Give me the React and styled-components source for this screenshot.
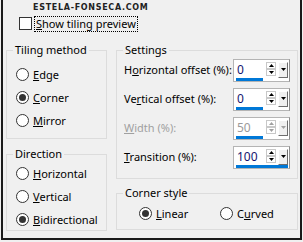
import React from "react";
import styled, { createGlobalStyle } from "styled-components";

const GlobalStyle = createGlobalStyle`
  html, body {
    margin: 0;
    padding: 0;
    background: #f0f0f0;
  }
  body {
    font-family: "Noto Sans", "Open Sans", sans-serif;
    font-size: 11px;
    color: #000;
  }
`;

const Frame = styled.div`
  box-sizing: border-box;
  width: 301px;
  height: 240px;
  margin-left: 1px;
  border: 2px solid #1a1a1a;
  border-top: none;
  padding: 0 2px 0 3px;
`;

const Watermark = styled.div`
  height: 16px;
  padding-left: 27px;
  font-family: "DejaVu Sans", sans-serif;
  font-weight: bold;
  font-size: 8px;
  line-height: 15px;
  letter-spacing: 0.7px;
  color: #222;
`;

const CheckRow = styled.div`
  display: flex;
  align-items: center;
  height: 15px;
  padding-left: 13px;
`;

const Box = styled.span`
  box-sizing: border-box;
  width: 13px;
  height: 13px;
  background: #fff;
  border: 1px solid #333;
`;

const FocusLabel = styled.span`
  margin-left: 3px;
  padding: 0 1px;
  line-height: 14px;
  white-space: nowrap;
  outline: 1px dotted #000;
`;

const Columns = styled.div`
  display: flex;
  gap: 9px;
  margin-top: 11px;
`;

const Column = styled.div`
  display: flex;
  flex-direction: column;
  gap: ${(p) => p.$gap}px;
  width: ${(p) => p.$width}px;
`;

const Group = styled.fieldset`
  box-sizing: border-box;
  margin: 0;
  min-width: 0;
  height: ${(p) => p.$height}px;
  padding: 0;
  border: 1px solid #dcdcdc;
`;

const Legend = styled.legend`
  margin-left: 6px;
  padding: 0 2px;
  line-height: 16px;
`;

const GroupBody = styled.div`
  padding: ${(p) => p.$pad};
`;

const Option = styled.label`
  display: flex;
  align-items: center;
  height: 23px;
  white-space: nowrap;
  width: ${(p) => (p.$width ? `${p.$width}px` : "auto")};
`;

const Radio = styled.span`
  box-sizing: border-box;
  display: flex;
  align-items: center;
  justify-content: center;
  flex: none;
  width: 13px;
  height: 13px;
  margin-right: 4px;
  border-radius: 50%;
  border: 1px solid #333;
  background: #fff;

  &::after {
    content: "";
    display: ${(p) => (p.$checked ? "block" : "none")};
    width: 7px;
    height: 7px;
    border-radius: 50%;
    background: #333;
  }
`;

const InlineOptions = styled.div`
  display: flex;
`;

const SettingRow = styled.div`
  display: flex;
  align-items: center;
  justify-content: space-between;
  height: 23px;
  margin-bottom: 6px;
  white-space: nowrap;
  color: ${(p) => (p.$disabled ? "#a0a0a0" : "#000")};
`;

const SettingLabel = styled.span`
  margin-top: -3px;
`;

const Spin = styled.div`
  position: relative;
  box-sizing: border-box;
  display: flex;
  align-items: center;
  flex: none;
  width: 57px;
  height: 23px;
  background: #fff;
  border: 1px solid #b4b4b4;
  border-right-color: #8e8e8e;
  font-size: 12px;

  &::after {
    content: "";
    position: absolute;
    left: 2px;
    bottom: 0;
    width: ${(p) => (p.$focused ? "52px" : "27px")};
    height: 3px;
    background: #0078d7;
  }
`;

const Field = styled.span`
  box-sizing: border-box;
  width: 27px;
  margin: -3px 3px 0 2px;
  padding-left: 1px;
  color: ${(p) => (p.$disabled ? "#9a9a9a" : "#141470")};
`;

const Arrows = styled.span`
  display: flex;
  flex-direction: column;
  width: 10px;
  margin-top: -3px;
`;

const ArrowBtn = styled.span`
  box-sizing: border-box;
  display: flex;
  align-items: center;
  justify-content: center;
  height: 7px;
  border: 1px solid #c8c8c8;
  background: #fff;
`;

const DropBtn = styled.span`
  box-sizing: border-box;
  display: flex;
  align-items: center;
  justify-content: center;
  width: 10px;
  height: 16px;
  margin: -2px 0 0 2px;
  background: #f0f0f0;
  border: 1px solid;
  border-color: #fff #6d6d6d #6d6d6d #fff;
`;

const Tri = ({ up, color }) => (
  <svg width="5" height="3" viewBox="0 0 5 3">
    <path d={up ? "M0 3 L2.5 0 L5 3 Z" : "M0 0 L5 0 L2.5 3 Z"} fill={color} />
  </svg>
);

const SpinBox = ({ value, disabled, focused }) => {
  const c = disabled ? "#a0a0a0" : "#000";
  return (
    <Spin $focused={focused}>
      <Field $disabled={disabled}>{value}</Field>
      <Arrows>
        <ArrowBtn>
          <Tri up color={c} />
        </ArrowBtn>
        <ArrowBtn>
          <Tri color={c} />
        </ArrowBtn>
      </Arrows>
      <DropBtn>
        <Tri color={c} />
      </DropBtn>
    </Spin>
  );
};

const Choice = ({ checked, children, width }) => (
  <Option $width={width}>
    <Radio $checked={checked} />
    {children}
  </Option>
);

export default function App() {
  return (
    <>
      <GlobalStyle />
      <Frame>
        <Watermark>ESTELA-FONSECA.COM</Watermark>
        <CheckRow>
          <Box />
          <FocusLabel>
            <u>S</u>how tiling preview
          </FocusLabel>
        </CheckRow>
        <Columns>
          <Column $width={101} $gap={7}>
            <Group $height={97}>
              <Legend>Tiling method</Legend>
              <GroupBody $pad="5px 0 0 9px">
                <Choice>
                  <u>E</u>dge
                </Choice>
                <Choice checked>
                  <u>C</u>orner
                </Choice>
                <Choice>
                  <u>M</u>irror
                </Choice>
              </GroupBody>
            </Group>
            <Group $height={85}>
              <Legend>Direction</Legend>
              <GroupBody $pad="0 0 0 9px">
                <Choice>
                  <u>H</u>orizontal
                </Choice>
                <Choice>
                  <u>V</u>ertical
                </Choice>
                <Choice checked>
                  <u>B</u>idirectional
                </Choice>
              </GroupBody>
            </Group>
          </Column>
          <Column $width={182} $gap={6}>
            <Group $height={137}>
              <Legend>Settings</Legend>
              <GroupBody $pad="1px 7px 0 7px">
                <SettingRow>
                  <SettingLabel>
                    H<u>o</u>rizontal offset (%):
                  </SettingLabel>
                  <SpinBox value="0" />
                </SettingRow>
                <SettingRow>
                  <SettingLabel>
                    Ve<u>r</u>tical offset (%):
                  </SettingLabel>
                  <SpinBox value="0" />
                </SettingRow>
                <SettingRow $disabled>
                  <SettingLabel>
                    <u>W</u>idth (%):
                  </SettingLabel>
                  <SpinBox value="50" disabled />
                </SettingRow>
                <SettingRow>
                  <SettingLabel>
                    <u>T</u>ransition (%):
                  </SettingLabel>
                  <SpinBox value="100" focused />
                </SettingRow>
              </GroupBody>
            </Group>
            <Group $height={45}>
              <Legend>Corner style</Legend>
              <GroupBody $pad="1px 0 0 22px">
                <InlineOptions>
                  <Choice checked width={81}>
                    <u>L</u>inear
                  </Choice>
                  <Choice>
                    C<u>u</u>rved
                  </Choice>
                </InlineOptions>
              </GroupBody>
            </Group>
          </Column>
        </Columns>
      </Frame>
    </>
  );
}
